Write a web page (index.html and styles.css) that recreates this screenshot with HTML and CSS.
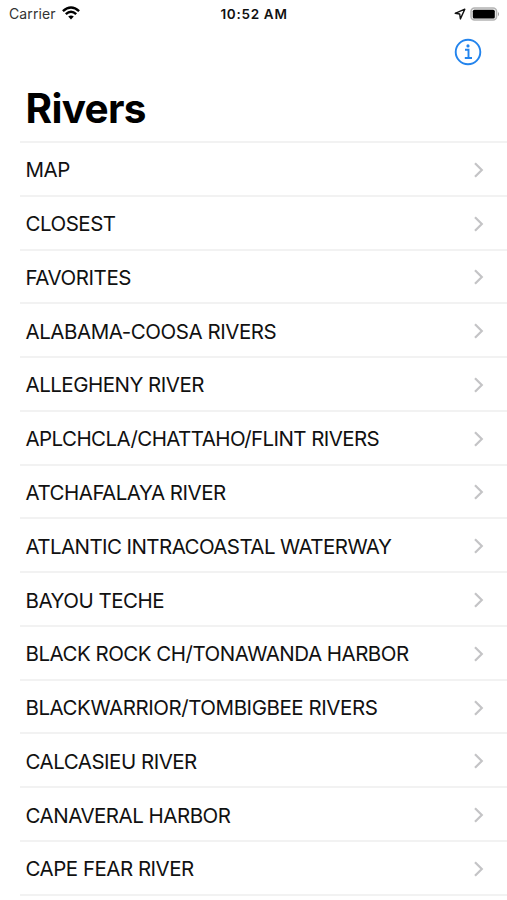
FILE: index.html
```html
<!DOCTYPE html>
<html lang="en">
<head>
<meta charset="utf-8">
<title>Rivers</title>
<link rel="stylesheet" href="styles.css">
</head>
<body>
<svg class="defs" width="0" height="0" aria-hidden="true"><symbol id="chevron" viewBox="0 0 12 18"><path d="M2 2.2L8.8 9L2 15.8" fill="none" stroke="#c4c4c6" stroke-width="2.2"/></symbol></svg>
<header class="status">
  <div class="carrier"><span>Carrier</span>
    <svg class="wifi" viewBox="0 0 18 14" width="18" height="14"><g fill="none" stroke="#000" stroke-width="2.4"><path d="M.9 5.2Q9-2.3 17.1 5.2"/><path d="M3.8 8.2Q9 3.3 14.2 8.2"/></g><path d="M6.2 10.6Q9 8.2 11.8 10.6L9 13.5z"/></svg>
  </div>
  <time class="time">10:52 AM</time>
  <div class="indicators">
    <svg class="location" viewBox="0 0 12 12" width="12" height="12"><path d="M1.2 5.3L10.8 1.2L6.4 10.9L5.7 6z" fill="none" stroke="#111" stroke-width="1.4" stroke-linejoin="round"/></svg>
    <svg viewBox="0 0 30 14" width="30" height="14"><rect x="1" y=".9" width="25.6" height="12.2" rx="3.5" fill="#eee" stroke="#b4b4b4" stroke-width="1.5"/><rect x="2.8" y="2.7" width="22" height="8.8" rx="1.6"/><path d="M28 4.7q2 2.3 0 4.6z" fill="#999"/></svg>
  </div>
</header>
<nav class="toolbar">
  <svg viewBox="0 0 28 28" width="28" height="28" role="img" aria-label="Information"><g fill="none" stroke="#2384ed" stroke-width="1.9"><circle cx="14" cy="14" r="12.3"/><path d="M11 11.8h3.5v8M10.8 20h7.2"/></g><circle cx="14" cy="7.9" r="1.6" fill="#2384ed"/></svg>
</nav>
<h1 class="title">Rivers</h1>
<ul class="list">
  <li><span>MAP</span><svg class="chevron"><use href="#chevron"/></svg></li>
  <li><span>CLOSEST</span><svg class="chevron"><use href="#chevron"/></svg></li>
  <li><span class="wide">FAVORITES</span><svg class="chevron"><use href="#chevron"/></svg></li>
  <li><span class="wide">ALABAMA-COOSA RIVERS</span><svg class="chevron"><use href="#chevron"/></svg></li>
  <li><span>ALLEGHENY RIVER</span><svg class="chevron"><use href="#chevron"/></svg></li>
  <li><span class="tight">APLCHCLA/CHATTAHO/FLINT RIVERS</span><svg class="chevron"><use href="#chevron"/></svg></li>
  <li><span>ATCHAFALAYA RIVER</span><svg class="chevron"><use href="#chevron"/></svg></li>
  <li><span class="tight">ATLANTIC INTRACOASTAL WATERWAY</span><svg class="chevron"><use href="#chevron"/></svg></li>
  <li><span>BAYOU TECHE</span><svg class="chevron"><use href="#chevron"/></svg></li>
  <li><span>BLACK ROCK CH/TONAWANDA HARBOR</span><svg class="chevron"><use href="#chevron"/></svg></li>
  <li><span class="wide">BLACKWARRIOR/TOMBIGBEE RIVERS</span><svg class="chevron"><use href="#chevron"/></svg></li>
  <li><span>CALCASIEU RIVER</span><svg class="chevron"><use href="#chevron"/></svg></li>
  <li><span>CANAVERAL HARBOR</span><svg class="chevron"><use href="#chevron"/></svg></li>
  <li><span>CAPE FEAR RIVER</span><svg class="chevron"><use href="#chevron"/></svg></li>
</ul>
</body>
</html>
```
FILE: styles.css
```css
* { box-sizing: border-box; }
body { margin: 0; height: 900px; overflow: hidden; background: #fff; color: #111; font-family: Inter, "Liberation Sans", sans-serif; }
svg { display: block; flex: none; }
.defs { position: absolute; }
.status { display: grid; grid-template-columns: 1fr auto 1fr; height: 27px; align-items: center; padding: 0 7px 0 9px; font-size: 14px; }
.carrier { display: flex; align-items: center; gap: 6px; color: #333; letter-spacing: 0.1px; }
.wifi { margin-top: -1px; }
.time { font-weight: 600; font-size: 13.5px; letter-spacing: 0.7px; margin-right: 1px; }
.indicators { display: flex; justify-content: flex-end; align-items: center; gap: 4px; }
.toolbar { display: flex; justify-content: flex-end; height: 51px; padding: 11px 25.5px 0 0; }
.title { margin: 0; height: 63px; padding-left: 25.5px; font-size: 40.5px; line-height: 61px; font-weight: 700; letter-spacing: -0.7px; color: #000; }
.list { margin: 0 0 0 20px; padding: 0; list-style: none; border-top: 2px solid #f2f2f2; }
.list li { display: flex; align-items: center; justify-content: space-between; height: 53.78px; padding: 2px 22.5px 0 5.5px; border-bottom: 2px solid #f2f2f2; font-size: 20.5px; letter-spacing: -0.5px; white-space: nowrap; }
.list .wide { letter-spacing: -0.45px; }
.list .tight { letter-spacing: -0.58px; }
.chevron { width: 12px; height: 18px; }
```
